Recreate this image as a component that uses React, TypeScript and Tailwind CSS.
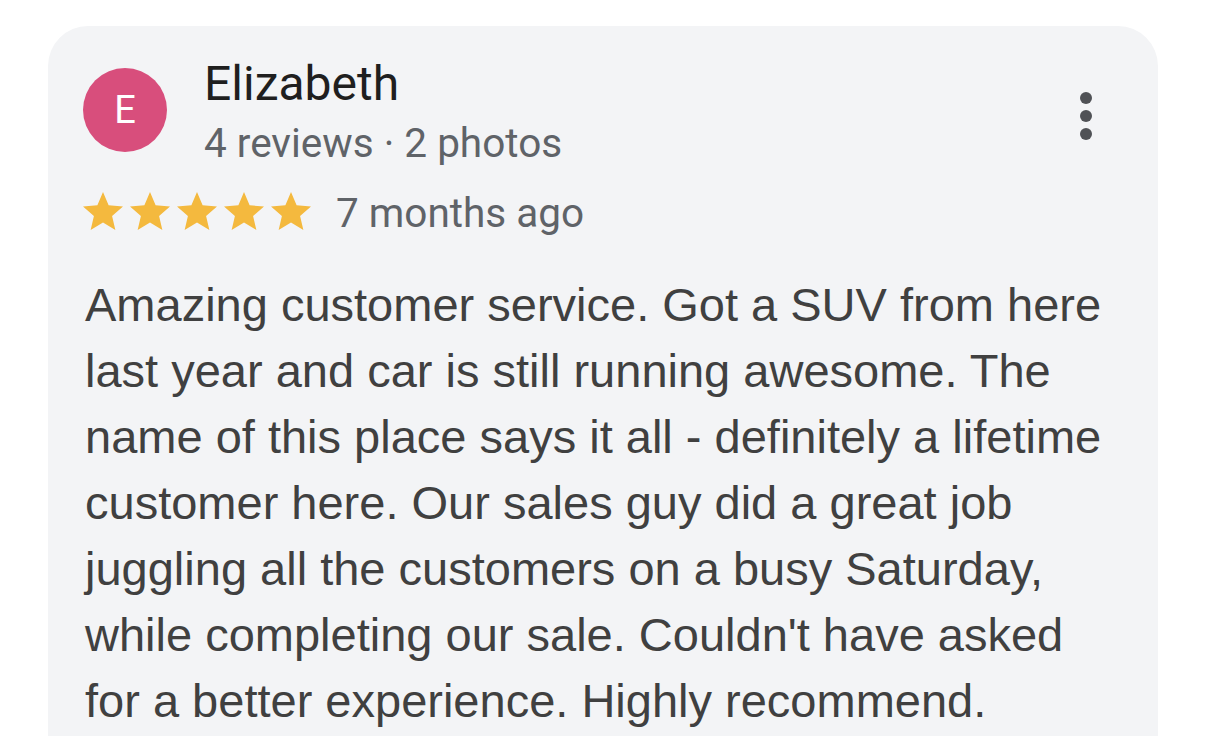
import React from 'react';

const STAR = 'M12 17.27L18.18 21l-1.64-7.03L22 9.24l-7.19-.61L12 2 9.19 8.63 2 9.24l5.46 4.73L5.82 21z';

function Star() {
  return (
    <svg width="40" height="38" viewBox="2 2 20 19" className="shrink-0">
      <path d={STAR} fill="#f4b93e" />
    </svg>
  );
}

export default function App() {
  return (
    <div className="min-h-screen bg-white overflow-hidden">
      <div className="mt-[26px] ml-[48px] w-[1110px] rounded-[40px] bg-[#f3f4f6] pl-[37px] pr-[36px] pt-[30px] pb-[60px]">
        {/* header */}
        <div className="flex items-start font-['Roboto',sans-serif]">
          <div className="mt-[12px] w-[84px] h-[84px] shrink-0 rounded-full bg-[#d84e7c] grid place-items-center text-white text-[38px] leading-none -ml-[2px]">
            E
          </div>
          <div className="ml-[37px]">
            <p className="text-[48px] leading-[56px] text-[#1f1f1f]">Elizabeth</p>
            <p className="mt-[3px] text-[40.5px] leading-[56px] text-[#5f6368]">4 reviews · 2 photos</p>
          </div>
          <svg width="12" height="48" viewBox="0 0 12 48" className="ml-auto mt-[36px] mr-[30px]">
            <circle cx="6" cy="6" r="6" fill="#505256" />
            <circle cx="6" cy="24" r="6" fill="#505256" />
            <circle cx="6" cy="42" r="6" fill="#505256" />
          </svg>
        </div>

        {/* rating */}
        <div className="mt-[14px] flex items-center font-['Roboto',sans-serif] -ml-[2px]">
          <div className="flex gap-[7px] mb-[5px]">
            <Star />
            <Star />
            <Star />
            <Star />
            <Star />
          </div>
          <span className="ml-[25px] text-[40.5px] leading-[56px] text-[#5f6368]">7 months ago</span>
        </div>

        {/* body */}
        <p className="mt-[31px] font-[Liberation_Sans,Arial,sans-serif] text-[47px] leading-[66px] text-[#404040]">
          Amazing customer service. Got a SUV from here last year and car is still running awesome. The name of this
          place says it all - definitely a lifetime customer here. Our sales guy did a great job juggling all the
          customers on a busy Saturday, while completing our sale. Couldn't have asked for a better experience. Highly
          recommend.
        </p>
      </div>
    </div>
  );
}
